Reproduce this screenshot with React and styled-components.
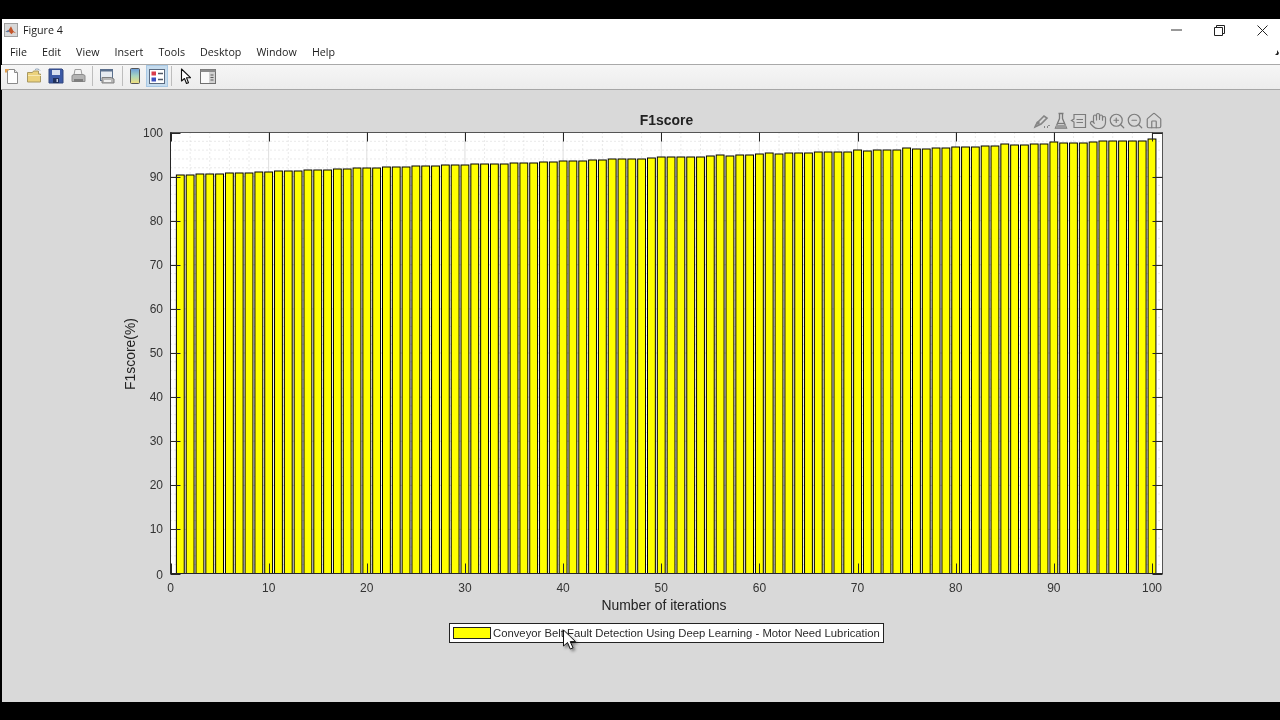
import React from "react";
import styled, { createGlobalStyle } from "styled-components";
import { Hand, Home, ZoomIn, ZoomOut } from "lucide-react";

const GlobalStyle = createGlobalStyle`
  html, body {
    margin: 0;
    height: 100%;
    background: #000;
  }
  #root {
    height: 100%;
  }
`;

const Page = styled.div`
  box-sizing: border-box;
  width: 1280px;
  height: 720px;
  padding: 19px 0 18px 2px;
  background: #000;
  overflow: hidden;
`;

const Window = styled.div`
  position: relative;
  display: flex;
  flex-direction: column;
  height: 100%;
  background: #d9d9d9;
  font-family: "Open Sans", "Noto Sans", sans-serif;
  color: #1c1c1c;
  filter: blur(0.35px);
`;

const TitleBar = styled.div`
  display: flex;
  align-items: center;
  box-sizing: border-box;
  height: 23px;
  padding-bottom: 1px;
  background: #fff;
  font-size: 10.7px;
`;

const AppIcon = styled.svg`
  width: 14px;
  height: 14px;
  margin: 0 5px 0 2px;
`;

const TitleText = styled.span`
  flex: 1;
`;

const WinButton = styled.div`
  display: flex;
  align-items: center;
  justify-content: center;
  width: 43px;
  height: 20px;
  margin-right: ${(p) => p.$right || 0}px;
`;

const MenuBar = styled.div`
  position: relative;
  display: flex;
  align-items: center;
  gap: 15.1px;
  box-sizing: border-box;
  height: 23px;
  padding: 0 0 3px 8px;
  background: #fff;
  border-bottom: 1px solid #a9a9a9;
  font-size: 10.7px;
`;

const DockArrow = styled.svg`
  position: absolute;
  right: 1px;
  top: 6px;
  width: 6px;
  height: 7px;
`;

const Toolbar = styled.div`
  display: flex;
  align-items: center;
  box-sizing: border-box;
  height: 25px;
  padding-bottom: 2px;
  margin-left: -1px;
  background: linear-gradient(#f6f6f6, #ececec);
  border-bottom: 1px solid #a6a6a6;
`;

const ToolButton = styled.div`
  display: flex;
  align-items: center;
  justify-content: center;
  box-sizing: border-box;
  width: 22px;
  height: 22px;
  background: ${(p) => (p.$active ? "#c6dcee" : "transparent")};
  border: 1px solid ${(p) => (p.$active ? "#a8c8e4" : "transparent")};
`;

const Separator = styled.div`
  width: 1px;
  height: 20px;
  margin: 0 ${(p) => p.$after}px 0 ${(p) => p.$before}px;
  background: #bdbdbd;
`;

const FigureBody = styled.div`
  position: relative;
  flex: 1;
  display: flex;
  flex-direction: column;
  align-items: flex-start;
`;

const Chart = styled.svg`
  display: block;
  width: 1278px;
  height: 533px;
  font-family: "Liberation Sans", Arial, sans-serif;
`;

const TickLabel = styled.text`
  font-size: 12px;
  fill: #333;
`;

const AxisTitle = styled.text`
  font-size: ${(p) => p.$size}px;
  font-weight: ${(p) => (p.$bold ? 700 : 400)};
  fill: #222;
`;

const AxesTools = styled.div`
  position: absolute;
  left: 1031px;
  top: 22px;
  display: flex;
  align-items: center;
  gap: 0.7px;
  color: #7c7c7c;
`;

const AxesTool = styled.div`
  display: flex;
  align-items: center;
  justify-content: center;
  width: 18px;
  height: 18px;
`;

const Legend = styled.div`
  display: flex;
  align-items: center;
  box-sizing: border-box;
  width: 435px;
  height: 20px;
  margin: 0 0 0 447px;
  padding-left: 3px;
  background: #fff;
  border: 1px solid #222;
  font-family: "Liberation Sans", Arial, sans-serif;
  font-size: 11.3px;
  color: #2a2a2a;
  white-space: nowrap;
`;

const Swatch = styled.div`
  flex: none;
  box-sizing: border-box;
  width: 38px;
  height: 12px;
  margin-right: 2px;
  background: #ffff00;
  border: 1px solid #222;
`;

const Cursor = styled.svg`
  position: absolute;
  left: 560px;
  top: 539px;
  width: 16px;
  height: 22px;
  filter: drop-shadow(2px 2px 1.5px rgba(0, 0, 0, 0.45));
`;

// pixel tops of the 100 bars, read off the reference
const barTops = [
  175, 175, 174, 174, 174, 173, 173, 173, 172, 172, 171, 171, 171, 170, 170, 170, 169, 169, 168,
  168, 168, 167, 167, 167, 166, 166, 166, 165, 165, 165, 164, 164, 164, 164, 163, 163, 163, 162,
  162, 161, 161, 161, 160, 160, 159, 159, 159, 159, 158, 157, 157, 157, 157, 157, 156, 155, 156,
  155, 155, 154, 153, 154, 153, 153, 153, 152, 152, 152, 152, 150, 151, 150, 150, 150, 148, 149,
  149, 148, 148, 147, 147, 147, 146, 146, 144, 145, 145, 144, 144, 142, 143, 143, 143, 142, 141,
  141, 141, 141, 141, 139,
];

const LEFT = 170.5;
const RIGHT = 1162.5;
const TOP = 132.5;
const BOTTOM = 573.5;
const xAt = (v) => LEFT + v * 9.815;
const yAt = (v) => BOTTOM - v * 4.41;
const range = (n, step = 1) => Array.from({ length: n }, (_, i) => i * step);

const PlotGrid = () => (
  <g fill="none">
    {range(51, 2).map((v) => (
      <line
        key={v}
        x1={xAt(v)}
        x2={xAt(v)}
        y1={TOP}
        y2={BOTTOM}
        stroke={v % 10 ? "#d4d4d4" : "#dedede"}
        strokeDasharray={v % 10 ? "1 3" : "none"}
      />
    ))}
    {range(51, 2).map((v) => (
      <line
        key={v}
        x1={LEFT}
        x2={RIGHT}
        y1={yAt(v)}
        y2={yAt(v)}
        stroke={v % 10 ? "#d4d4d4" : "#dedede"}
        strokeDasharray={v % 10 ? "1 3" : "none"}
      />
    ))}
  </g>
);

const PlotBars = () => (
  <g fill="#ffff00" stroke="#000">
    {barTops.map((top, i) => (
      <rect key={i} x={xAt(i + 1) - 3.93} y={top} width={7.85} height={BOTTOM - top} />
    ))}
  </g>
);

const PlotAxes = () => (
  <g>
    <g stroke="#262626" fill="none">
      <rect x={LEFT} y={TOP} width={RIGHT - LEFT} height={BOTTOM - TOP} stroke="#555" />
      <line x1={LEFT} x2={LEFT} y1={TOP} y2={BOTTOM} />
      <line x1={LEFT} x2={RIGHT} y1={BOTTOM} y2={BOTTOM} />
      {range(11, 10).map((v) => (
        <path
          key={v}
          d={`M${Math.round(xAt(v)) + 0.5} ${TOP}v9M${Math.round(xAt(v)) + 0.5} ${BOTTOM}v-10`}
        />
      ))}
      {range(11, 10).map((v) => (
        <path
          key={v}
          d={`M${LEFT} ${Math.round(yAt(v)) + 0.5}h10M${RIGHT} ${Math.round(yAt(v)) + 0.5}h-10`}
        />
      ))}
    </g>
    {range(11, 10).map((v) => (
      <TickLabel key={v} x={xAt(v)} y={592} textAnchor="middle">
        {v}
      </TickLabel>
    ))}
    {range(11, 10).map((v) => (
      <TickLabel key={v} x={163} y={yAt(v) + 4 + (v === 0 ? 1 : 0)} textAnchor="end">
        {v}
      </TickLabel>
    ))}
    <AxisTitle x={666.5} y={125} textAnchor="middle" $size={13.9} $bold>
      F1score
    </AxisTitle>
    <AxisTitle x={664} y={610} textAnchor="middle" $size={13.9}>
      Number of iterations
    </AxisTitle>
    <AxisTitle x={135} y={354} textAnchor="middle" $size={13.9} transform="rotate(-90 135 354)">
      F1score(%)
    </AxisTitle>
  </g>
);

const MatlabIcon = () => (
  <AppIcon viewBox="0 0 15 15">
    <rect x="0.5" y="0.5" width="14" height="14" fill="#d8d8d8" stroke="#9a9a9a" />
    <path d="M1.5 9.5 5 7.5 7.5 3.5 10 8.5 13 11 10 10 8 12 5.5 9.5Z" fill="#c4552a" />
    <path d="M1.5 9.5 5 7.5 6 9 4 10Z" fill="#5b7fa8" />
  </AppIcon>
);

const NewIcon = () => (
  <svg width="16" height="17" viewBox="0 0 16 17">
    <path d="M3.5 1.5h7l3 3v11h-10Z" fill="#fff" stroke="#8a8a8a" />
    <path d="M10.5 1.5v3h3" fill="#e8e8e8" stroke="#8a8a8a" />
    <path d="M1 1h4v1.5H3v2H1Z" fill="#e0a050" />
  </svg>
);

const OpenIcon = () => (
  <svg width="17" height="16" viewBox="0 0 17 16">
    <path d="M1.5 14V4.5h5l1-1.5h5v3h2V14Z" fill="#ecd27c" stroke="#a89860" />
    <path d="M2 7h13v1H2Z" fill="#f7e9b4" />
    <path d="M9 1.5c2-1 4-.5 5 1" fill="none" stroke="#8aa0b8" />
  </svg>
);

const SaveIcon = () => (
  <svg width="16" height="16" viewBox="0 0 16 16">
    <path d="M1 1h13l1 1v13H1Z" fill="#3c5aa6" stroke="#33477e" />
    <rect x="4" y="2" width="8" height="5" fill="#d8e0f0" />
    <rect x="5" y="10" width="6" height="5" fill="#20305c" />
    <rect x="8.5" y="11" width="1.5" height="3" fill="#c8d0e4" />
  </svg>
);

const PrintIcon = () => (
  <svg width="17" height="16" viewBox="0 0 17 16">
    <path d="M5 1.5h6l1 5.5H4Z" fill="#f2f2f2" stroke="#9e9e9e" />
    <path d="M2 7.5 4 6.5h9l2 1v6H2Z" fill="#b4b4b4" stroke="#8c8c8c" />
    <rect x="4" y="11" width="9" height="3" fill="#7e7e7e" />
  </svg>
);

const PreviewIcon = () => (
  <svg width="17" height="17" viewBox="0 0 17 17">
    <rect x="2.5" y="1.5" width="12" height="11" fill="#e6ebf1" stroke="#5a6f8c" />
    <rect x="2.5" y="1.5" width="12" height="2" fill="#5a6f8c" />
    <path d="M4 9.500h9l3 1.500v4H4Z" fill="#b8b8b8" stroke="#808080" />
    <rect x="6" y="12" width="7" height="2" fill="#f0f0f0" />
  </svg>
);

const ColorbarIcon = () => (
  <svg width="10" height="16" viewBox="0 0 10 16">
    <defs>
      <linearGradient id="cbar" x1="0" y1="0" x2="0" y2="1">
        <stop offset="0" stopColor="#6a9cdc" />
        <stop offset="0.5" stopColor="#a8d4c0" />
        <stop offset="1" stopColor="#f4e07a" />
      </linearGradient>
    </defs>
    <rect x="0.5" y="0.5" width="9" height="15" rx="1" fill="url(#cbar)" stroke="#555" />
  </svg>
);

const LegendIcon = () => (
  <svg width="16" height="15" viewBox="0 0 16 15">
    <rect x="0.5" y="0.5" width="15" height="14" fill="#fff" stroke="#5a6a80" />
    <rect x="2.5" y="2.5" width="4.500" height="4" fill="#d83c4c" />
    <rect x="2.5" y="8.5" width="4.500" height="4" fill="#3c50c0" />
    <path d="M9 4.500h5M9 10.500h5" stroke="#505a68" strokeWidth="1.4" />
  </svg>
);

const ArrowIcon = () => (
  <svg width="12" height="17" viewBox="0 0 12 17">
    <path
      d="M1.500 1v12l3-2.500 2 5 2-.8-2-5h4Z"
      fill="#fff"
      stroke="#111"
      strokeWidth="1.1"
      strokeLinejoin="round"
    />
  </svg>
);

const PropertyIcon = () => (
  <svg width="16" height="15" viewBox="0 0 16 15">
    <rect x="0.5" y="0.5" width="15" height="14" fill="#fafafa" stroke="#707070" />
    <rect x="0.5" y="0.5" width="15" height="2.500" fill="#8c8c8c" />
    <rect x="9" y="3" width="6" height="11" fill="#d2d2d2" />
    <path d="M10.500 6h3M10.500 8.500h3M10.500 11h3" stroke="#5c5c5c" />
  </svg>
);

const BrushTool = () => (
  <svg width="18" height="18" viewBox="0 0 18 18" fill="none" stroke="#858585" strokeWidth="1.6">
    <path d="M2 15c1-3 2-4 3-5l6-6 3 2-6 6c-2 1-4 2-6 3Z" />
    <path d="M11 15h1M14 15h1M16 13v1" strokeWidth="1.8" />
    <circle cx="5" cy="11" r="1" fill="#858585" />
  </svg>
);

const FlaskTool = () => (
  <svg width="18" height="18" viewBox="0 0 18 18" fill="none" stroke="#7a7a7a" strokeWidth="1.3">
    <path d="M6.500 1.500h5M7.500 1.500v5L3.500 16h11l-4-9.500v-5" />
    <path d="M5 11.500h8" />
    <path d="M4 13h10v3H4Z" fill="#9a9a9a" stroke="none" />
  </svg>
);

const DataTipTool = () => (
  <svg width="18" height="18" viewBox="0 0 18 18" fill="none" stroke="#7c7c7c" strokeWidth="1.2">
    <path d="M4 2.500h11.500v13H4V10L1.500 8.500 4 7Z" />
    <path d="M6.500 7.500h6.500M6.500 10.500h6.500" />
  </svg>
);

const App = () => {
  const menus = ["File", "Edit", "View", "Insert", "Tools", "Desktop", "Window", "Help"];
  return (
    <>
      <GlobalStyle />
      <Page>
        <Window>
          <TitleBar>
            <MatlabIcon />
            <TitleText>Figure 4</TitleText>
            <WinButton>
              <svg width="11" height="2" viewBox="0 0 11 2">
                <path d="M0 1h11" stroke="#333" />
              </svg>
            </WinButton>
            <WinButton>
              <svg width="11" height="11" viewBox="0 0 11 11" fill="none" stroke="#222">
                <path d="M.5 2.500h8v8h-8ZM2.500 2.500v-2h8v8h-2" />
              </svg>
            </WinButton>
            <WinButton $right={-4}>
              <svg width="11" height="11" viewBox="0 0 11 11" stroke="#222">
                <path d="M.5.500l10 10M10.500.500l-10 10" />
              </svg>
            </WinButton>
          </TitleBar>
          <MenuBar>
            {menus.map((m) => (
              <span key={m}>{m}</span>
            ))}
            <DockArrow viewBox="0 0 6 7">
              <path d="M0 1l4 4V2l2 3-1 2H2l2-2Z" fill="#222" />
            </DockArrow>
          </MenuBar>
          <Toolbar>
            <ToolButton><NewIcon /></ToolButton>
            <ToolButton><OpenIcon /></ToolButton>
            <ToolButton><SaveIcon /></ToolButton>
            <ToolButton><PrintIcon /></ToolButton>
            <Separator $before={3} $after={2} />
            <ToolButton><PreviewIcon /></ToolButton>
            <Separator $before={5} $after={1} />
            <ToolButton><ColorbarIcon /></ToolButton>
            <ToolButton $active><LegendIcon /></ToolButton>
            <Separator $before={3} $after={3} />
            <ToolButton><ArrowIcon /></ToolButton>
            <ToolButton><PropertyIcon /></ToolButton>
          </Toolbar>
          <FigureBody>
            <Chart viewBox="2 90 1278 533">
              <rect x={LEFT} y={TOP} width={RIGHT - LEFT} height={BOTTOM - TOP} fill="#fff" />
              <PlotGrid />
              <PlotBars />
              <PlotAxes />
            </Chart>
            <Legend>
              <Swatch />
              Conveyor Belt Fault Detection Using Deep Learning - Motor Need Lubrication
            </Legend>
            <AxesTools>
              <AxesTool><BrushTool /></AxesTool>
              <AxesTool><FlaskTool /></AxesTool>
              <AxesTool><DataTipTool /></AxesTool>
              <AxesTool><Hand size={18} strokeWidth={1.6} /></AxesTool>
              <AxesTool><ZoomIn size={18} strokeWidth={1.6} /></AxesTool>
              <AxesTool><ZoomOut size={18} strokeWidth={1.6} /></AxesTool>
              <AxesTool><Home size={18} strokeWidth={1.6} /></AxesTool>
            </AxesTools>
            <Cursor viewBox="0 0 16 22">
              <path
                d="M1.500 1v16l4-3.500 2.800 6.500 2.700-1.200-2.800-6.200h5.300Z"
                fill="#fff"
                stroke="#111"
                strokeLinejoin="round"
              />
            </Cursor>
          </FigureBody>
        </Window>
      </Page>
    </>
  );
};

export default App;
